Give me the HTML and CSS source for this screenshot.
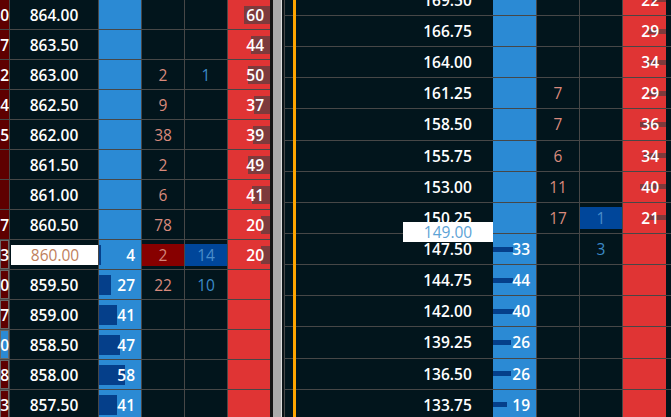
FILE: index.html
```html
<!DOCTYPE html>
<html lang="en">
<head>
  <meta charset="UTF-8">
  <meta name="viewport" content="width=device-width, initial-scale=1.0">
  <title>Price Ladder</title>
  <link rel="stylesheet" href="styles.css">
</head>
<body>
  <div class="board">
    <div class="ladder ladder-a" id="ladderA"></div>
    <div class="splitter">
      <span class="edge"></span>
      <span class="thumb"></span>
      <span class="shine"></span>
      <span class="gap"></span>
    </div>
    <div class="ladder ladder-b" id="ladderB"></div>
  </div>

  <script>
    // left book: tag = last column of the order panel, bq/aq = resting size, b/a = traded
    const bookA = [
      { tag: "40", price: "864.00", aq: 60 },
      { tag: "57", price: "863.50", aq: 44 },
      { tag: "12", price: "863.00", b: 2, a: 1, aq: 50 },
      { tag: "24", price: "862.50", b: 9, aq: 37 },
      { tag: "35", price: "862.00", b: 38, aq: 39 },
      { tag: "", price: "861.50", b: 2, aq: 49 },
      { tag: "", price: "861.00", b: 6, aq: 41 },
      { tag: "17", price: "860.50", b: 78, aq: 20 },
      { tag: "13", boxed: true, price: "860.00", last: true, bq: 4, b: 2, a: 14, hit: true, aq: 20 },
      { tag: "10", boxed: true, price: "859.50", bq: 27, b: 22, a: 10 },
      { tag: "27", boxed: true, price: "859.00", bq: 41 },
      { tag: "20", boxed: true, blue: true, price: "858.50", bq: 47 },
      { tag: "18", boxed: true, price: "858.00", bq: 58 },
      { tag: "23", boxed: true, price: "857.50", bq: 41 }
    ];

    // right book: bars here are fixed widths (wb / wa)
    const bookB = [
      { price: "169.50", aq: 22, wa: 14 },
      { price: "166.75", aq: 29, wa: 18 },
      { price: "164.00", aq: 34, wa: 20 },
      { price: "161.25", b: 7, aq: 29, wa: 18 },
      { price: "158.50", b: 7, aq: 36, wa: 26 },
      { price: "155.75", b: 6, aq: 34, wa: 22 },
      { price: "153.00", b: 11, aq: 40, wa: 26 },
      { price: "150.25", b: 17, a: 1, hitAsk: true, aq: 21, wa: 19 },
      { price: "147.50", bq: 33, wb: 20, a: 3, trade: "149.00" },
      { price: "144.75", bq: 44, wb: 20 },
      { price: "142.00", bq: 40, wb: 21 },
      { price: "139.25", bq: 26, wb: 18 },
      { price: "136.50", bq: 26, wb: 18 },
      { price: "133.75", bq: 19, wb: 14 }
    ];

    function show(v) {
      return v === undefined ? "" : v;
    }

    function barStyle(px) {
      return px ? ` style="--bar: ${px}px"` : "";
    }

    function tradeCells(r, hitBid, hitAsk) {
      const bid = hitBid
        ? `<span class="hit hit-bid">${r.b}</span>`
        : show(r.b);
      const ask = hitAsk
        ? `<span class="hit hit-ask">${r.a}</span>`
        : show(r.a);
      return `
        <div class="cell traded-bid">${bid}</div>
        <div class="cell traded-ask">${ask}</div>
      `;
    }

    const ladderA = document.getElementById("ladderA");
    bookA.forEach(r => {
      const row = document.createElement("div");
      row.className = "row";
      let tagClass = "cell tag";
      if (r.boxed) tagClass += " boxed";
      if (r.blue) tagClass += " tag-blue";
      const price = r.last ? `<span class="mark">${r.price}</span>` : r.price;
      row.innerHTML = `
        <div class="${tagClass}"><span>${r.tag}</span></div>
        <div class="cell price">${price}</div>
        <div class="cell bids"${barStyle(r.bq ? Math.round(r.bq * 0.44) : 0)}>${show(r.bq)}</div>
        ${tradeCells(r, r.hit, r.hit)}
        <div class="cell asks"${barStyle(r.aq ? Math.round(r.aq * 0.44) : 0)}>${show(r.aq)}</div>
      `;
      ladderA.appendChild(row);
    });

    const ladderB = document.getElementById("ladderB");
    bookB.forEach(r => {
      const row = document.createElement("div");
      row.className = "row";
      row.innerHTML = `
        <div class="cell spacer"></div>
        <div class="cell price">${r.price}</div>
        <div class="cell bids"${barStyle(r.wb)}>${show(r.bq)}</div>
        ${tradeCells(r, false, r.hitAsk)}
        <div class="cell asks"${barStyle(r.wa)}>${show(r.aq)}</div>
        ${r.trade ? `<div class="last-trade">${r.trade}</div>` : ""}
      `;
      ladderB.appendChild(row);
    });
  </script>
</body>
</html>
```

FILE: styles.css
```css
body {
  margin: 0;
  height: 417px;
  overflow: hidden;
  background: #02151c;
  color: #fff;
  font-family: "Open Sans", "Noto Sans", sans-serif;
  font-size: 15.5px;
}
.board {
  display: flex;
  height: 417px;
  overflow: hidden;
}

/* ladders */
.ladder-a {
  flex: none;
  width: 270px;
}
.ladder-b {
  flex: 1;
  position: relative;
  margin-top: -15.15px;
  border-left: 1px solid #474747;
}
.ladder-b::before {
  content: "";
  position: absolute;
  top: 0;
  bottom: 0;
  left: 8px;
  width: 3px;
  background: #ffa500;
  z-index: 2;
}
.row {
  display: grid;
  box-sizing: border-box;
  border-bottom: 1px solid #474747;
}
.ladder-a .row {
  height: 30px;
  grid-template-columns: 10px 89px 43px 43px 43px 42px;
}
.ladder-b .row {
  position: relative;
  height: 31.15px;
  grid-template-columns: 117px 91px 44px 43px 43px 43px;
}

/* scrollbar between the two books */
.splitter {
  flex: none;
  display: flex;
  width: 14px;
}
.splitter .edge {
  width: 3px;
  background: #151515;
}
.splitter .thumb {
  width: 8px;
  background: #ababab;
}
.splitter .shine {
  width: 1px;
  background: #dcdcdc;
}
.splitter .gap {
  width: 2px;
  background: #0b1215;
}

/* cells */
.cell {
  display: flex;
  align-items: center;
  justify-content: center;
  box-sizing: border-box;
  border-right: 1px solid #474747;
  overflow: hidden;
  white-space: nowrap;
}
.tag {
  justify-content: flex-end;
  background: #5e0000;
  font-weight: 600;
}
.tag.boxed {
  box-shadow: inset 0 0 0 1px #686868;
}
.tag.tag-blue {
  background: #2b8ad4;
}
.price {
  font-weight: 600;
}
.ladder-b .price,
.spacer {
  border-right: none;
}
.mark {
  display: flex;
  align-items: center;
  justify-content: center;
  flex: 1;
  height: 20px;
  margin: 0 -1px 0 1px;
  background: #fff;
  color: #c0805c;
  font-weight: 400;
}
.bids {
  justify-content: flex-end;
  padding-right: 6px;
  font-weight: 600;
  background: #2b8ad4 linear-gradient(#053f8a, #053f8a) no-repeat left center / var(--bar, 0px) 20px;
}
.asks {
  justify-content: flex-end;
  padding-right: 6px;
  border-right: none;
  font-weight: 600;
  background: #e03434 linear-gradient(#7d3a3c, #7d3a3c) no-repeat right center / var(--bar, 0px) 18px;
}
.ladder-b .bids {
  background-size: var(--bar, 0px) 5px;
}
.ladder-b .asks {
  background-size: var(--bar, 0px) 5px;
  padding-right: 7px;
}
.traded-bid {
  color: #d98a7c;
}
.traded-ask {
  color: #3b8bc9;
}
.hit {
  display: flex;
  align-items: center;
  justify-content: center;
  width: 100%;
  height: 22px;
}
.hit-bid {
  background: #870000;
  color: #d4847a;
}
.hit-ask {
  background: #00469a;
  color: #4a8dca;
}
.last-trade {
  position: absolute;
  top: -12px;
  left: 118px;
  z-index: 3;
  display: flex;
  align-items: center;
  justify-content: center;
  width: 90px;
  height: 20px;
  background: #fff;
  color: #5ca3d6;
}
```
